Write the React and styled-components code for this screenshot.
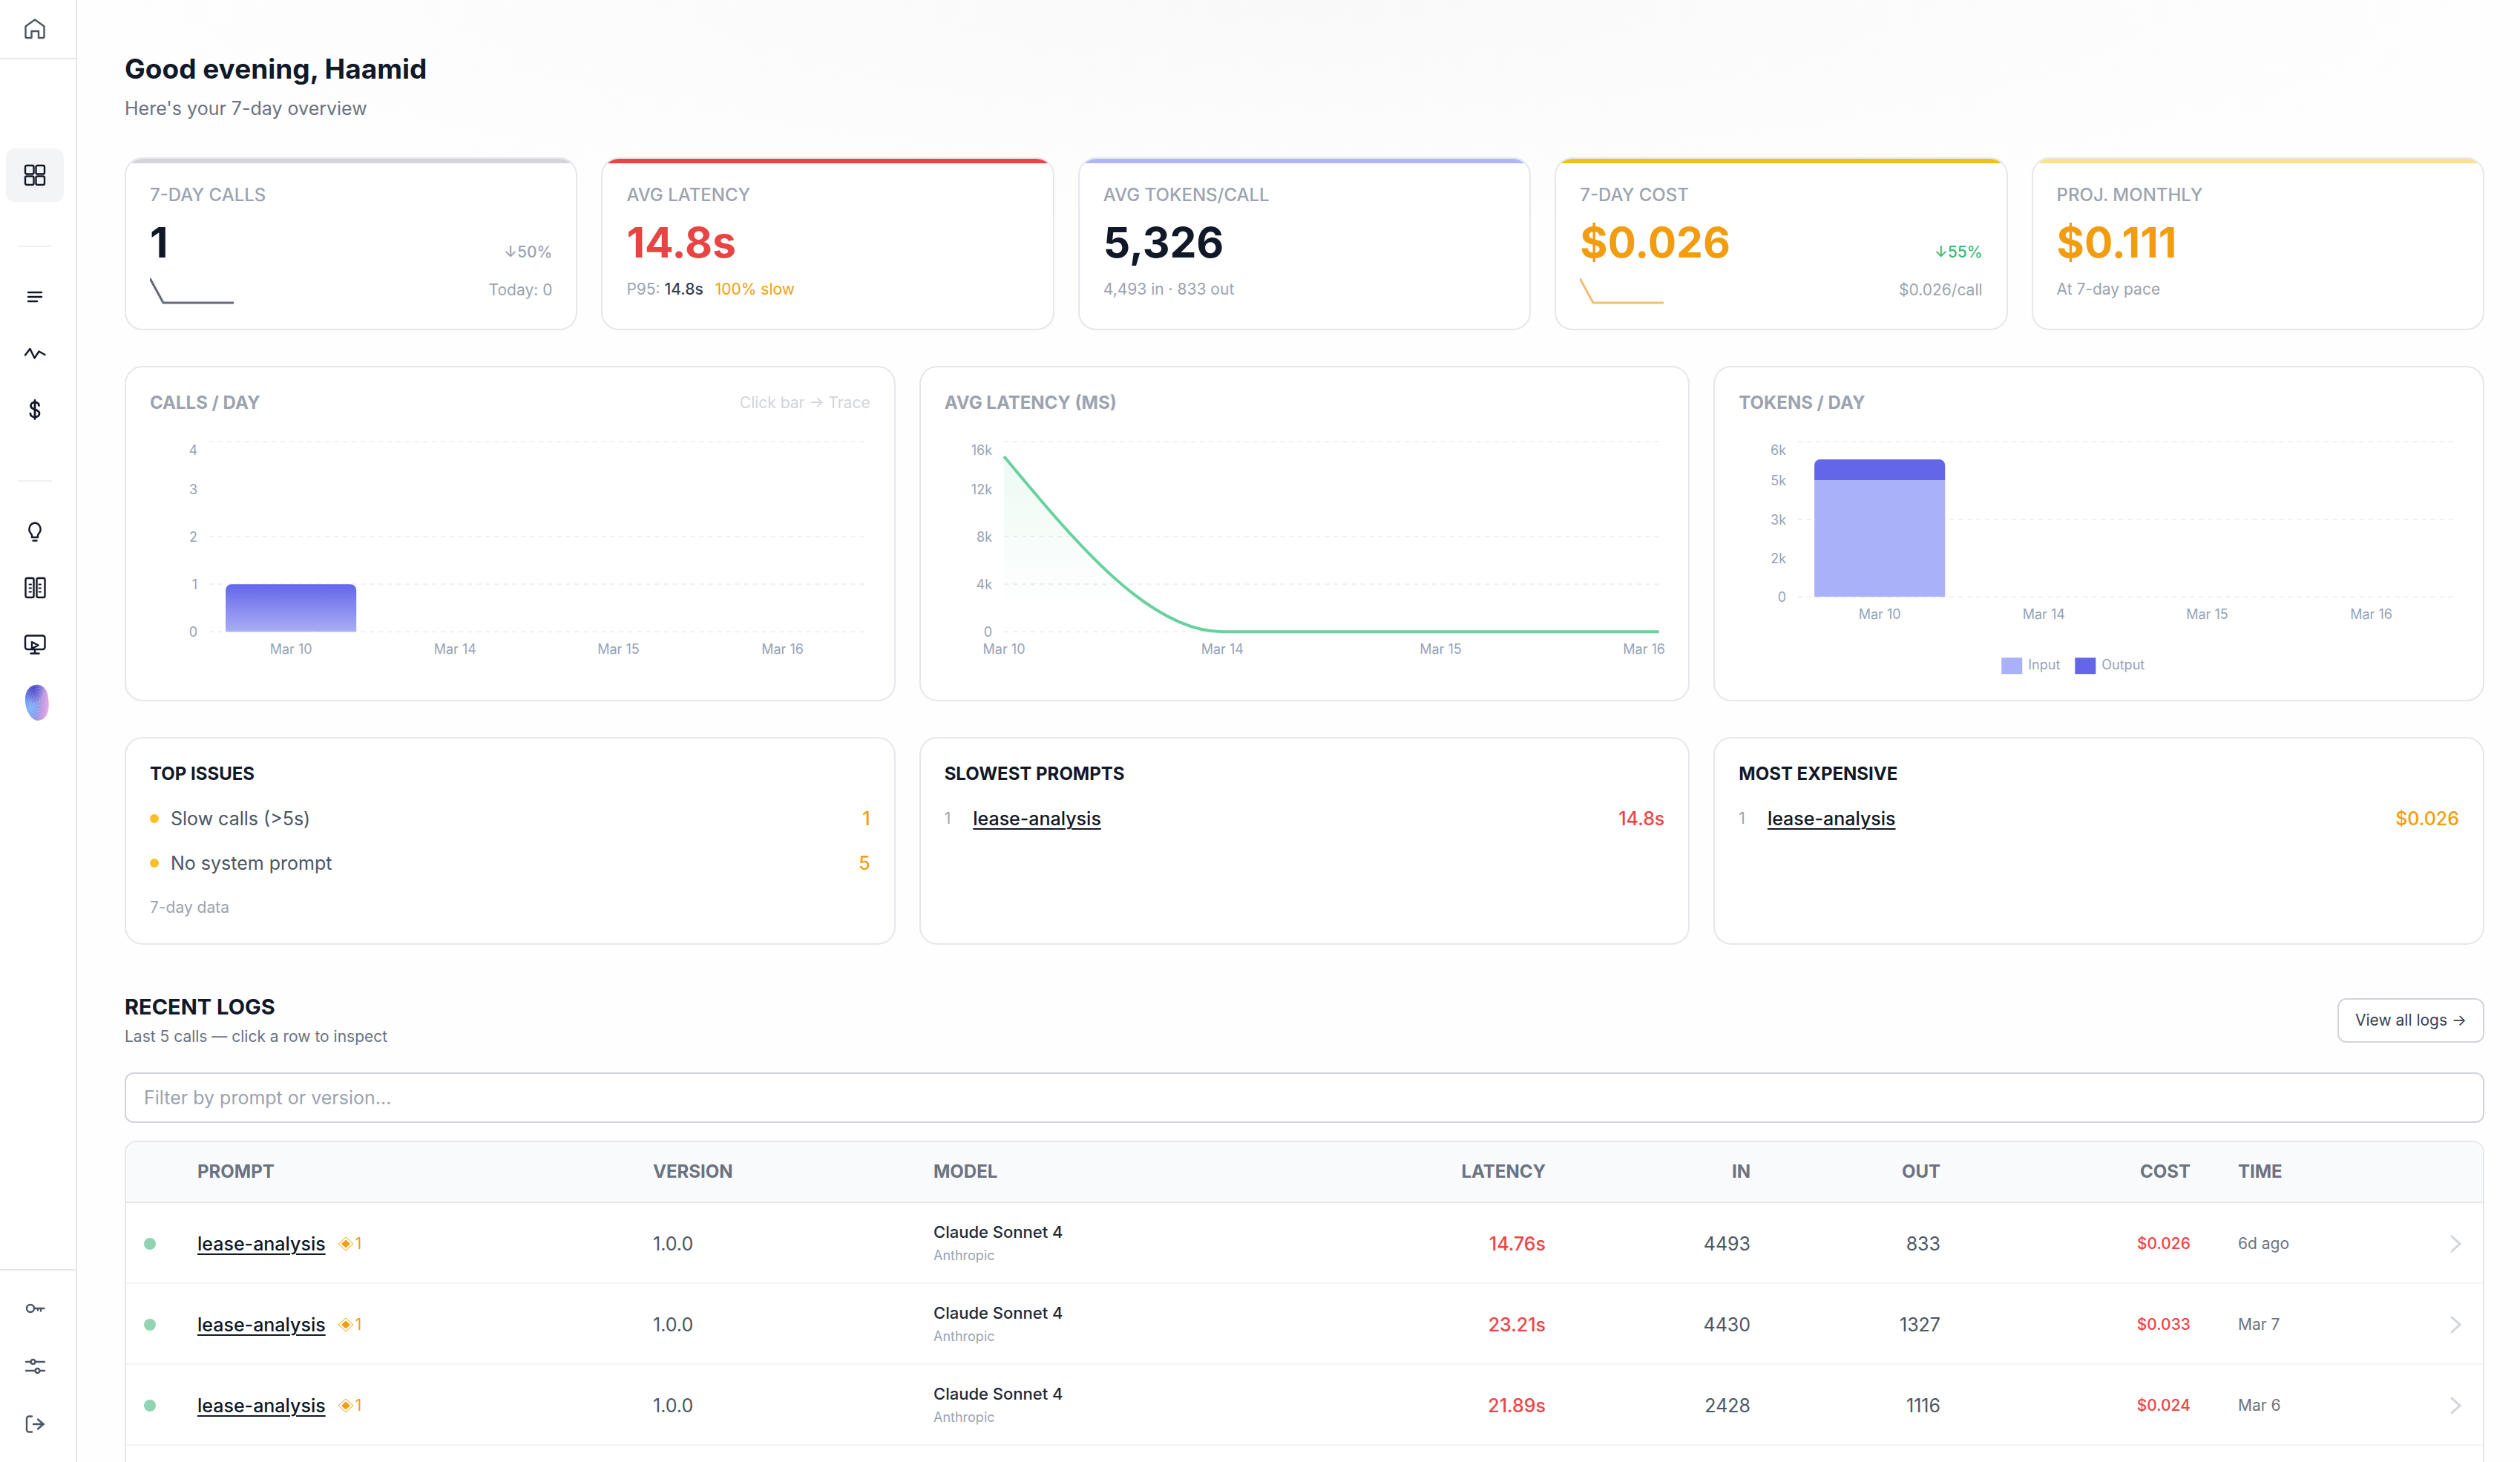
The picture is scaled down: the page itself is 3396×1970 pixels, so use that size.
import React, { useState } from 'react';
import styled, { createGlobalStyle } from 'styled-components';

const GlobalStyle = createGlobalStyle`
  * {
    box-sizing: border-box;
  }

  body {
    margin: 0;
    background: #fefefe;
    color: #111827;
    font-family: Inter, 'Liberation Sans', sans-serif;
    font-size: 25px;
    line-height: 40px;
  }

  h1, h2, h3, p, ul, ol {
    margin: 0;
    padding: 0;
  }

  button, input {
    font: inherit;
    color: inherit;
  }
`;

const Shell = styled.div`
  display: flex;
  height: 100vh;
  overflow: hidden;
`;

const Sidebar = styled.aside`
  display: flex;
  flex-direction: column;
  flex: none;
  width: 104px;
  border-right: 2px solid #e5e7eb;
  background: #fff;
`;

const SidebarTop = styled.div`
  flex: none;
  height: 80px;
  padding-top: 3px;
  border-bottom: 2px solid #e5e7eb;
`;

const NavList = styled.nav`
  display: flex;
  flex-direction: column;
  flex: 1;
  gap: 4px;
  padding-top: 120px;
`;

const BottomList = styled.nav`
  display: flex;
  flex-direction: column;
  gap: 6px;
  padding: 15px 0;
  border-top: 2px solid #e5e7eb;
`;

const NavLink = styled.a`
  display: flex;
  align-items: center;
  justify-content: center;
  width: 78px;
  height: 72px;
  margin-left: 8px;
  border-radius: 12px;
  color: ${({ $muted }) => ($muted ? '#4b5563' : '#111827')};
  background: ${({ $active }) => ($active ? '#f3f4f6' : 'transparent')};
`;

const NavDivider = styled.div`
  flex: none;
  width: 46px;
  height: 2px;
  margin: 55px 0 27px 24px;
  background: #f0f0f2;
`;

const Main = styled.main`
  display: flex;
  flex-direction: column;
  flex: 1;
  min-width: 0;
  padding: 64px 48px 0 64px;
  background: radial-gradient(ellipse 50% 300px at 50% 0, #f9f9f9, #fefefe);
`;

const PageTitle = styled.h1`
  font-size: 37px;
  font-weight: 700;
  line-height: 58px;
`;

const PageSubtitle = styled.p`
  margin-top: 4px;
  color: #6b7280;
`;

const Grid = styled.div`
  display: grid;
  grid-template-columns: repeat(${({ $columns }) => $columns}, minmax(0, 1fr));
  gap: 32px;
  margin-top: ${({ $top = 48 }) => $top}px;
`;

const Card = styled.section`
  position: relative;
  padding: 32px;
  overflow: hidden;
  background: #fff;
  border: 2px solid #e5e7eb;
  border-radius: 24px;
`;

const StatCard = styled(Card)`
  &::before {
    content: '';
    position: absolute;
    inset: 0 0 auto;
    height: 6px;
    background: ${({ $accent }) => $accent};
  }
`;

const StatLabel = styled.h2`
  color: #9ca3af;
  font-size: 24px;
  font-weight: 500;
  line-height: 34px;
`;

const StatRow = styled.div`
  display: flex;
  align-items: baseline;
  justify-content: space-between;
  margin-top: 15px;
`;

const StatValue = styled.span`
  color: ${({ $color }) => $color};
  font-size: 57px;
  font-weight: 700;
  line-height: 64px;
`;

const Delta = styled.span`
  color: ${({ $good }) => ($good ? '#3cb97c' : '#9ca3af')};
  font-size: 21px;
  font-weight: 500;
`;

const StatFoot = styled.div`
  display: flex;
  align-items: center;
  justify-content: ${({ $split }) => ($split ? 'space-between' : 'flex-start')};
  height: 40px;
  margin-top: 11px;
  gap: 16px;
  color: #9ca3af;
  font-size: 21px;
`;

const Strong = styled.b`
  color: #374151;
  font-weight: 500;
`;

const Warn = styled.span`
  color: #f59e0b;
`;

const CardHead = styled.div`
  display: flex;
  align-items: center;
  justify-content: space-between;
`;

const CardTitle = styled.h2`
  color: ${({ $dark }) => ($dark ? '#111827' : '#9ca3af')};
  font-size: 24px;
  font-weight: 700;
  line-height: 32px;
`;

const Hint = styled.span`
  color: #d1d5db;
  font-size: 21px;
  line-height: 32px;
`;

const ChartSvg = styled.svg`
  display: block;
  width: 100%;
  height: auto;
  margin-top: 28px;
  overflow: visible;

  text {
    fill: #94a3b8;
    font-size: 18px;
  }
`;

const RowList = styled.ul`
  display: flex;
  flex-direction: column;
  gap: 20px;
  margin-top: 24px;
  list-style: none;
`;

const ListRow = styled.li`
  display: flex;
  align-items: center;
  gap: ${({ $gap }) => $gap}px;
  color: #4b5563;
`;

const IssueDot = styled.span`
  width: 12px;
  height: 12px;
  border-radius: 50%;
  background: #fbbf24;
`;

const Rank = styled.span`
  color: #9ca3af;
  font-size: 21px;
`;

const RowValue = styled.span`
  margin-left: auto;
  color: ${({ $color }) => $color};
  font-weight: 500;
`;

const FootNote = styled.p`
  margin-top: 24px;
  color: #9ca3af;
  font-size: 21px;
  line-height: 32px;
`;

const PromptLink = styled.a`
  color: #111827;
  font-weight: 500;
  text-decoration: underline;
  text-decoration-thickness: 2px;
  text-underline-offset: 4px;
`;

const LogsHead = styled.div`
  display: flex;
  align-items: center;
  justify-content: space-between;
  margin-top: 64px;
`;

const LogsTitle = styled.h2`
  font-size: 29px;
  font-weight: 700;
  line-height: 40px;
`;

const LogsSubtitle = styled.p`
  margin-top: 4px;
  color: #6b7280;
  font-size: 21px;
  line-height: 32px;
`;

const ViewAll = styled.button`
  height: 60px;
  padding: 0 22px;
  background: #fff;
  border: 2px solid #d1d5db;
  border-radius: 12px;
  color: #374151;
  font-size: 21px;
`;

const FilterInput = styled.input`
  flex: none;
  width: 100%;
  height: 68px;
  margin: 32px 0 24px;
  padding: 0 24px;
  background: #fff;
  border: 2px solid #d1d5db;
  border-radius: 12px;

  &::placeholder {
    color: #9ca3af;
    opacity: 1;
  }
`;

const TableWrap = styled.div`
  flex: 1;
  overflow: hidden;
  background: #fff;
  border: 2px solid #e5e7eb;
  border-bottom: 0;
  border-radius: 16px 16px 0 0;
`;

const Table = styled.table`
  width: 100%;
  table-layout: fixed;
  border-collapse: separate;
  border-spacing: 0;
`;

const Th = styled.th`
  height: 82px;
  padding: 0 32px;
  background: #f9fafb;
  border-bottom: 2px solid #e5e7eb;
  color: #6b7280;
  font-size: 24px;
  font-weight: 700;
  text-align: ${({ $align }) => $align || 'left'};
`;

const Td = styled.td`
  height: 109px;
  padding: 2px ${({ $pad = 32 }) => $pad}px 0;
  border-bottom: 2px solid #f3f4f6;
  color: ${({ $color }) => $color || '#4b5563'};
  font-size: ${({ $small }) => ($small ? 21 : 25)}px;
  font-weight: ${({ $medium }) => ($medium ? 500 : 400)};
  text-align: ${({ $align }) => $align || 'left'};
`;

const StatusDot = styled.span`
  display: block;
  width: 16px;
  height: 16px;
  border-radius: 50%;
  background: #90d4b4;
`;

const PromptCell = styled.div`
  display: flex;
  align-items: center;
  gap: 16px;
`;

const IssueBadge = styled.span`
  display: inline-flex;
  align-items: center;
  gap: 2px;
  color: #f59e0b;
  font-size: 21px;
`;

const ModelName = styled.div`
  color: #1f2937;
  font-size: 22px;
  font-weight: 500;
  line-height: 32px;
`;

const Provider = styled.div`
  color: #9ca3af;
  font-size: 18px;
  line-height: 32px;
`;

const ChevronSvg = styled.svg`
  display: block;
  margin-left: auto;
`;

const Icon = ({ children, weight = 2.4 }) => (
  <svg
    width="32"
    height="32"
    viewBox="0 0 32 32"
    fill="none"
    stroke="currentColor"
    strokeWidth={weight}
    strokeLinecap="round"
    strokeLinejoin="round"
    aria-hidden="true"
  >
    {children}
  </svg>
);

const HomeIcon = () => (
  <Icon>
    <path d="M3.500 12.500 16 3.500l12.500 9V27a1 1 0 0 1-1 1H21v-9h-9.500v9H4.500a1 1 0 0 1-1-1z" />
  </Icon>
);

const OverviewIcon = () => (
  <Icon>
    <rect x="3" y="3" width="11.500" height="11.500" rx="2" />
    <rect x="17.500" y="3" width="11.500" height="11.500" rx="2" />
    <rect x="3" y="17.500" width="11.500" height="11.500" rx="2" />
    <rect x="17.500" y="17.500" width="11.500" height="11.500" rx="2" />
  </Icon>
);

const LogsIcon = () => (
  <Icon>
    <path d="M7 10h18M7 16h18M7 22h12" />
  </Icon>
);

const ActivityIcon = () => (
  <Icon>
    <path d="M3 18.500 9.500 10l6 12.500 6-9 8 4.500" />
  </Icon>
);

const DollarIcon = () => (
  <Icon weight={2.8}>
    <path d="M16 3.500v25M21.500 10.500c0-2.800-2.400-4.500-5.500-4.500s-5.500 1.700-5.500 4.700c0 6.500 11.500 3.800 11.500 10.300 0 3.200-2.700 5-6 5s-6-1.800-6-4.800" />
  </Icon>
);

const BulbIcon = () => (
  <Icon>
    <path d="M12 24v-2.500c0-1.300-.7-2-1.600-3A8.600 8.600 0 0 1 16 4.500a8.600 8.600 0 0 1 5.600 14c-.9 1-1.600 1.700-1.600 3V24zM13.500 28.500h5" />
  </Icon>
);

const CompareIcon = () => (
  <Icon>
    <rect x="3.500" y="3" width="11" height="26" rx="2" />
    <rect x="18.500" y="3" width="11" height="26" rx="2" />
    <path d="M8.500 11.500h2.500M8.500 16.500h2.500M8.500 21.500h2.500M21.500 11.500h2.500M21.500 16.500h2.500M21.500 21.500h2.500" strokeWidth="2" />
  </Icon>
);

const PlaygroundIcon = () => (
  <Icon>
    <rect x="3" y="4.500" width="26.500" height="18.500" rx="3" />
    <path d="M16 23v5.500M10.500 28.500h11M12 13v9l8.500-4.500z" />
  </Icon>
);

const BlobIcon = () => (
  <svg width="40" height="56" viewBox="-6 -6 40 56" aria-hidden="true">
    <defs>
      <linearGradient id="blobBase" x1="0" y1="0.400" x2="1" y2="0.600">
        <stop offset="0" stopColor="#5f84ea" />
        <stop offset="0.500" stopColor="#968fe2" />
        <stop offset="1" stopColor="#f0a8e4" />
      </linearGradient>
      <radialGradient id="blobTop" cx="0.350" cy="0.080" r="0.450">
        <stop offset="0" stopColor="#4f45c8" />
        <stop offset="1" stopColor="#4f45c8" stopOpacity="0" />
      </radialGradient>
      <radialGradient id="blobLow" cx="0.250" cy="0.650" r="0.400">
        <stop offset="0" stopColor="#7dbafa" />
        <stop offset="1" stopColor="#7dbafa" stopOpacity="0" />
      </radialGradient>
      <clipPath id="blobClip">
        <path d="M15 1c8-1 14 4 16 12 2 9 3 20-1 28-3 6-8 8-13 8C8 47 1 34 1 20 1 10 6 2 15 1z" />
      </clipPath>
    </defs>
    <g clipPath="url(#blobClip)">
      <rect width="34" height="50" fill="url(#blobBase)" />
      <rect width="34" height="50" fill="url(#blobLow)" />
      <rect width="34" height="50" fill="url(#blobTop)" />
      <g fill="none" stroke="#fff" strokeOpacity="0.200" strokeWidth="0.800">
        {[3, 6, 9, 12, 15, 18, 21].map((r) => (
          <ellipse key={r} cx="18" cy="21" rx={r} ry={r * 1.3} />
        ))}
      </g>
    </g>
  </svg>
);

const KeyIcon = () => (
  <Icon>
    <circle cx="10" cy="16" r="5" />
    <path d="M15 16h13.500M20 16.500v2M24 16.500v3" />
  </Icon>
);

const SlidersIcon = () => (
  <Icon>
    <path d="M4 10h6.500M17 10h12M4 22h12.500M23 22h6" />
    <circle cx="13.500" cy="10" r="3" />
    <circle cx="19.500" cy="22" r="3" />
  </Icon>
);

const LogoutIcon = () => (
  <Icon>
    <path d="M12 5.500H8A3 3 0 0 0 5 8.500v15a3 3 0 0 0 3 3h4M14 16h14M20 9.500l7.500 6.500-7.500 6.500" />
  </Icon>
);

const Spark = ({ color }) => (
  <svg width="116" height="40" viewBox="0 0 116 40" fill="none" stroke={color} strokeWidth="3" aria-hidden="true">
    <path d="M0 4 18 37H113" strokeLinejoin="round" />
  </svg>
);

const Diamond = () => (
  <svg width="22" height="20" viewBox="0 0 22 20" fill="currentColor" aria-hidden="true">
    <path d="M11 1l10 9-10 9L1 10z" fill="none" stroke="currentColor" strokeWidth="1" />
    <path d="M11 4.500l6 5.500-6 5.500L5 10z" />
  </svg>
);

const Chevron = () => (
  <ChevronSvg width="16" height="24" viewBox="0 0 16 24" fill="none" stroke="#d1d5db" strokeWidth="3" strokeLinecap="round" aria-hidden="true">
    <path d="M2 2l11 10L2 22" />
  </ChevronSvg>
);

const DAYS = ['Mar 10', 'Mar 14', 'Mar 15', 'Mar 16'];
const BAND_CENTERS = [190, 411, 631, 852];

const Axes = ({ lines, ticks }) => (
  <>
    {lines.map((y) => (
      <line key={y} x1="80" x2="962" y1={y} y2={y} stroke="#f0f0f2" strokeWidth="2" strokeDasharray="6 6" />
    ))}
    {ticks.map(([label, y]) => (
      <text key={label} x="64" y={y + 7} textAnchor="end">{label}</text>
    ))}
  </>
);

const CallsChart = () => (
  <ChartSvg viewBox="0 0 970 324" role="img" aria-label="Calls per day">
    <defs>
      <linearGradient id="callsFill" x1="0" y1="0" x2="0" y2="1">
        <stop offset="0" stopColor="#6466e9" />
        <stop offset="1" stopColor="#a8aef5" />
      </linearGradient>
    </defs>
    <Axes lines={[8, 136, 200, 264]} ticks={[['4', 19], ['3', 72], ['2', 136], ['1', 200], ['0', 264]]} />
    <path d="M102 264V208a8 8 0 0 1 8-8H270a8 8 0 0 1 8 8V264z" fill="url(#callsFill)" />
    {DAYS.map((day, i) => (
      <text key={day} x={BAND_CENTERS[i]} y="294" textAnchor="middle">{day}</text>
    ))}
  </ChartSvg>
);

const LatencyChart = () => (
  <ChartSvg viewBox="0 0 970 324" role="img" aria-label="Average latency per day">
    <defs>
      <linearGradient id="latencyFill" x1="0" y1="0" x2="0" y2="1">
        <stop offset="0" stopColor="#34c77b" stopOpacity="0.090" />
        <stop offset="0.900" stopColor="#34c77b" stopOpacity="0" />
      </linearGradient>
    </defs>
    <Axes lines={[8, 136, 200, 264]} ticks={[['16k', 19], ['12k', 72], ['8k', 136], ['4k', 200], ['0', 264]]} />
    <path d="M80 28C178 146 276 264 374 264H80z" fill="url(#latencyFill)" />
    <path d="M80 28C178 146 276 264 374 264H962" fill="none" stroke="#68d19e" strokeWidth="4" />
    {DAYS.map((day, i) => (
      <text key={day} x={[80, 374, 668, 942][i]} y="294" textAnchor="middle">{day}</text>
    ))}
  </ChartSvg>
);

const TokensChart = () => (
  <ChartSvg viewBox="0 0 970 324" role="img" aria-label="Tokens per day">
    <Axes lines={[8, 113, 217]} ticks={[['6k', 19], ['5k', 60], ['3k', 113], ['2k', 165], ['0', 217]]} />
    <rect x="102" y="60" width="176" height="157" fill="#a9b2f8" />
    <path d="M102 60V40a8 8 0 0 1 8-8H270a8 8 0 0 1 8 8V60z" fill="#6466e9" />
    {DAYS.map((day, i) => (
      <text key={day} x={BAND_CENTERS[i]} y="247" textAnchor="middle">{day}</text>
    ))}
    <rect x="354" y="299" width="28" height="22" fill="#a9b2f8" />
    <text x="390" y="315">Input</text>
    <rect x="453" y="299" width="28" height="22" fill="#6466e9" />
    <text x="489" y="315">Output</text>
  </ChartSvg>
);

const LOGS = [
  { latency: '14.76s', input: 4493, output: 833, cost: '$0.026', time: '6d ago' },
  { latency: '23.21s', input: 4430, output: 1327, cost: '$0.033', time: 'Mar 7' },
  { latency: '21.89s', input: 2428, output: 1116, cost: '$0.024', time: 'Mar 6' },
];

const COLUMN_WIDTHS = [64, 614, 378, 520, 369, 276, 256, 337, 284, 78];

const LogsTable = ({ rows }) => (
  <TableWrap>
    <Table>
      <colgroup>
        {COLUMN_WIDTHS.map((width, i) => (
          <col key={i} width={width} />
        ))}
      </colgroup>
      <thead>
        <tr>
          <Th aria-label="Status" />
          <Th>PROMPT</Th>
          <Th>VERSION</Th>
          <Th>MODEL</Th>
          <Th $align="right">LATENCY</Th>
          <Th $align="right">IN</Th>
          <Th $align="right">OUT</Th>
          <Th $align="right">COST</Th>
          <Th>TIME</Th>
          <Th aria-label="Open" />
        </tr>
      </thead>
      <tbody>
        {rows.map((row) => (
          <tr key={row.latency}>
            <Td $pad={24}><StatusDot /></Td>
            <Td>
              <PromptCell>
                <PromptLink href="#prompt">lease-analysis</PromptLink>
                <IssueBadge><Diamond />1</IssueBadge>
              </PromptCell>
            </Td>
            <Td>1.0.0</Td>
            <Td>
              <ModelName>Claude Sonnet 4</ModelName>
              <Provider>Anthropic</Provider>
            </Td>
            <Td $align="right" $color="#ef4444" $medium>{row.latency}</Td>
            <Td $align="right">{row.input}</Td>
            <Td $align="right">{row.output}</Td>
            <Td $align="right" $color="#ef4444" $medium $small>{row.cost}</Td>
            <Td $color="#6b7280" $small>{row.time}</Td>
            <Td $pad={28}><Chevron /></Td>
          </tr>
        ))}
      </tbody>
    </Table>
  </TableWrap>
);

const App = () => {
  const [filter, setFilter] = useState('');
  const rows = LOGS.filter(() => 'lease-analysis 1.0.0'.includes(filter.toLowerCase()));

  return (
    <>
      <GlobalStyle />
      <Shell>
        <Sidebar>
          <SidebarTop>
            <NavLink href="#home" aria-label="Home" $muted><HomeIcon /></NavLink>
          </SidebarTop>
          <NavList aria-label="Main">
            <NavLink href="#overview" aria-label="Overview" $active><OverviewIcon /></NavLink>
            <NavDivider />
            <NavLink href="#logs" aria-label="Logs"><LogsIcon /></NavLink>
            <NavLink href="#traces" aria-label="Traces"><ActivityIcon /></NavLink>
            <NavLink href="#costs" aria-label="Costs"><DollarIcon /></NavLink>
            <NavDivider />
            <NavLink href="#insights" aria-label="Insights"><BulbIcon /></NavLink>
            <NavLink href="#compare" aria-label="Compare"><CompareIcon /></NavLink>
            <NavLink href="#playground" aria-label="Playground"><PlaygroundIcon /></NavLink>
            <NavLink href="#assistant" aria-label="Assistant"><BlobIcon /></NavLink>
          </NavList>
          <BottomList aria-label="Account">
            <NavLink href="#keys" aria-label="API keys" $muted><KeyIcon /></NavLink>
            <NavLink href="#settings" aria-label="Settings" $muted><SlidersIcon /></NavLink>
            <NavLink href="#logout" aria-label="Log out" $muted><LogoutIcon /></NavLink>
          </BottomList>
        </Sidebar>

        <Main>
          <PageTitle>Good evening, Haamid</PageTitle>
          <PageSubtitle>Here's your 7-day overview</PageSubtitle>

          <Grid $columns={5} $top={46}>
            <StatCard $accent="#d4d4d8">
              <StatLabel>7-DAY CALLS</StatLabel>
              <StatRow>
                <StatValue $color="#111827">1</StatValue>
                <Delta>↓50%</Delta>
              </StatRow>
              <StatFoot $split>
                <Spark color="#646b78" />
                <span>Today: 0</span>
              </StatFoot>
            </StatCard>
            <StatCard $accent="#e94444">
              <StatLabel>AVG LATENCY</StatLabel>
              <StatRow><StatValue $color="#e94444">14.8s</StatValue></StatRow>
              <StatFoot>
                <span>P95: <Strong>14.8s</Strong></span>
                <Warn>100% slow</Warn>
              </StatFoot>
            </StatCard>
            <StatCard $accent="#b1b5fb">
              <StatLabel>AVG TOKENS/CALL</StatLabel>
              <StatRow><StatValue $color="#111827">5,326</StatValue></StatRow>
              <StatFoot>4,493 in · 833 out</StatFoot>
            </StatCard>
            <StatCard $accent="#f6bd21">
              <StatLabel>7-DAY COST</StatLabel>
              <StatRow>
                <StatValue $color="#f29d0f">$0.026</StatValue>
                <Delta $good>↓55%</Delta>
              </StatRow>
              <StatFoot $split>
                <Spark color="#f0bd78" />
                <span>$0.026/call</span>
              </StatFoot>
            </StatCard>
            <StatCard $accent="#fae18a">
              <StatLabel>PROJ. MONTHLY</StatLabel>
              <StatRow><StatValue $color="#f29d0f">$0.111</StatValue></StatRow>
              <StatFoot>At 7-day pace</StatFoot>
            </StatCard>
          </Grid>

          <Grid $columns={3}>
            <Card>
              <CardHead>
                <CardTitle>CALLS / DAY</CardTitle>
                <Hint>Click bar → Trace</Hint>
              </CardHead>
              <CallsChart />
            </Card>
            <Card>
              <CardTitle>AVG LATENCY (MS)</CardTitle>
              <LatencyChart />
            </Card>
            <Card>
              <CardTitle>TOKENS / DAY</CardTitle>
              <TokensChart />
            </Card>
          </Grid>

          <Grid $columns={3}>
            <Card>
              <CardTitle $dark>TOP ISSUES</CardTitle>
              <RowList>
                <ListRow $gap={16}>
                  <IssueDot />
                  <span>Slow calls (&gt;5s)</span>
                  <RowValue $color="#f59e0b">1</RowValue>
                </ListRow>
                <ListRow $gap={16}>
                  <IssueDot />
                  <span>No system prompt</span>
                  <RowValue $color="#f59e0b">5</RowValue>
                </ListRow>
              </RowList>
              <FootNote>7-day data</FootNote>
            </Card>
            <Card>
              <CardTitle $dark>SLOWEST PROMPTS</CardTitle>
              <RowList as="ol">
                <ListRow $gap={30}>
                  <Rank>1</Rank>
                  <PromptLink href="#prompt">lease-analysis</PromptLink>
                  <RowValue $color="#ef4444">14.8s</RowValue>
                </ListRow>
              </RowList>
            </Card>
            <Card>
              <CardTitle $dark>MOST EXPENSIVE</CardTitle>
              <RowList as="ol">
                <ListRow $gap={30}>
                  <Rank>1</Rank>
                  <PromptLink href="#prompt">lease-analysis</PromptLink>
                  <RowValue $color="#f59e0b">$0.026</RowValue>
                </ListRow>
              </RowList>
            </Card>
          </Grid>

          <LogsHead>
            <div>
              <LogsTitle>RECENT LOGS</LogsTitle>
              <LogsSubtitle>Last 5 calls — click a row to inspect</LogsSubtitle>
            </div>
            <ViewAll type="button">View all logs →</ViewAll>
          </LogsHead>
          <FilterInput
            type="text"
            aria-label="Filter logs"
            placeholder="Filter by prompt or version..."
            value={filter}
            onChange={(e) => setFilter(e.target.value)}
          />
          <LogsTable rows={rows} />
        </Main>
      </Shell>
    </>
  );
};

export default App;
